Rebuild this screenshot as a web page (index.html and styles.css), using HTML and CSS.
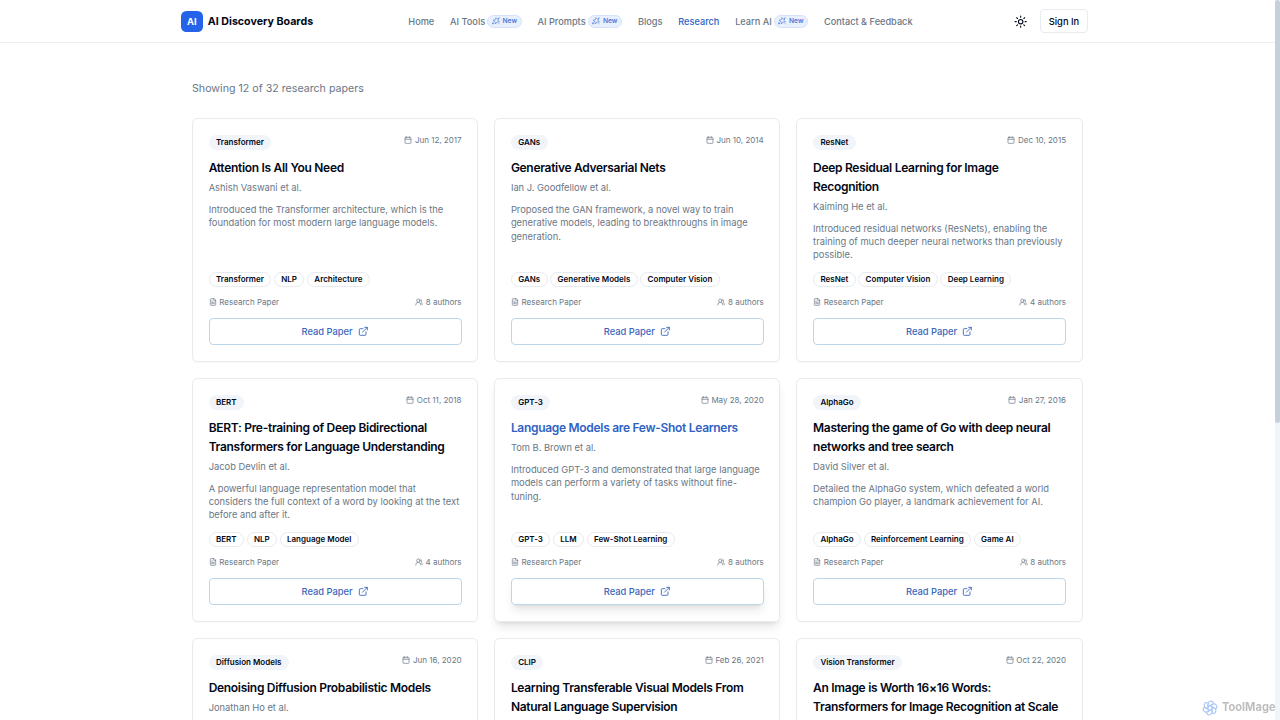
FILE: index.html
```
<!DOCTYPE html>
<html lang="en">
<head>
    <meta charset="UTF-8">
    <title>AI Discovery Boards</title>
    <link rel="stylesheet" href="styles.css">
</head>
<body>
<svg class="sprite">
    <symbol id="calendar" viewBox="0 0 24 24"><path d="M8 2v4M16 2v4M3 10h18"/><rect x="3" y="4" width="18" height="18" rx="2"/></symbol>
    <symbol id="file" viewBox="0 0 24 24"><path d="M15 2H6a2 2 0 0 0-2 2v16a2 2 0 0 0 2 2h12a2 2 0 0 0 2-2V7Z"/><path d="M14 2v4a2 2 0 0 0 2 2h4M10 9H8M16 13H8M16 17H8"/></symbol>
    <symbol id="users" viewBox="0 0 24 24"><path d="M18 21a8 8 0 0 0-16 0"/><circle cx="10" cy="8" r="5"/><path d="M22 20c0-3.37-2-6.5-4-8a5 5 0 0 0-.45-8.3"/></symbol>
    <symbol id="external" viewBox="0 0 24 24"><path d="M15 3h6v6M10 14 21 3M18 13v6a2 2 0 0 1-2 2H5a2 2 0 0 1-2-2V8a2 2 0 0 1 2-2h6"/></symbol>
    <symbol id="sun" viewBox="0 0 24 24"><circle cx="12" cy="12" r="4"/><path d="M12 2v2M12 20v2M4.93 4.93l1.41 1.41M17.66 17.66l1.41 1.41M2 12h2M20 12h2M6.34 17.66l-1.41 1.41M19.07 4.93l-1.41 1.41"/></symbol>
    <symbol id="sparkles" viewBox="0 0 24 24"><path d="M21 3 18 10l4 5-7 0-5 6-1-7-6-4 7-2 2-6 4 4Z"/><path d="M3 17v4M1 19h4M21 20h.01"/></symbol>
    <symbol id="petal" viewBox="0 0 24 24"><path d="M9 14V6a4.300 4.300 0 0 1 8-2.200M12 8.500l5-2.900"/></symbol>
</svg>

<header class="header">
    <div class="header-inner">
        <a class="brand"><span class="logo">AI</span>AI Discovery Boards</a>
        <nav class="nav">
            <a>Home</a>
            <a>AI Tools<span class="new"><svg><use href="#sparkles"/></svg>New</span></a>
            <a>AI Prompts<span class="new"><svg><use href="#sparkles"/></svg>New</span></a>
            <a>Blogs</a>
            <a class="active">Research</a>
            <a>Learn AI<span class="new"><svg><use href="#sparkles"/></svg>New</span></a>
            <a>Contact &amp; Feedback</a>
        </nav>
        <div class="actions">
            <span class="theme"><svg><use href="#sun"/></svg></span>
            <a class="sign-in">Sign In</a>
        </div>
    </div>
</header>

<main class="main">
    <p class="count">Showing 12 of 32 research papers</p>
    <div class="grid">
        <article class="card">
            <div class="top"><span class="badge">Transformer</span><span class="info"><svg><use href="#calendar"/></svg>Jun 12, 2017</span></div>
            <h3>Attention Is All You Need</h3>
            <p class="author">Ashish Vaswani et al.</p>
            <p class="desc">Introduced the Transformer architecture, which is the foundation for most modern large language models.</p>
            <div class="tags"><span>Transformer</span><span>NLP</span><span>Architecture</span></div>
            <div class="meta"><span class="info"><svg><use href="#file"/></svg>Research Paper</span><span class="info"><svg><use href="#users"/></svg>8 authors</span></div>
            <a class="read">Read Paper<svg><use href="#external"/></svg></a>
        </article>
        <article class="card">
            <div class="top"><span class="badge">GANs</span><span class="info"><svg><use href="#calendar"/></svg>Jun 10, 2014</span></div>
            <h3>Generative Adversarial Nets</h3>
            <p class="author">Ian J. Goodfellow et al.</p>
            <p class="desc">Proposed the GAN framework, a novel way to train generative models, leading to breakthroughs in image generation.</p>
            <div class="tags"><span>GANs</span><span>Generative Models</span><span>Computer Vision</span></div>
            <div class="meta"><span class="info"><svg><use href="#file"/></svg>Research Paper</span><span class="info"><svg><use href="#users"/></svg>8 authors</span></div>
            <a class="read">Read Paper<svg><use href="#external"/></svg></a>
        </article>
        <article class="card">
            <div class="top"><span class="badge">ResNet</span><span class="info"><svg><use href="#calendar"/></svg>Dec 10, 2015</span></div>
            <h3>Deep Residual Learning for Image Recognition</h3>
            <p class="author">Kaiming He et al.</p>
            <p class="desc">Introduced residual networks (ResNets), enabling the training of much deeper neural networks than previously possible.</p>
            <div class="tags"><span>ResNet</span><span>Computer Vision</span><span>Deep Learning</span></div>
            <div class="meta"><span class="info"><svg><use href="#file"/></svg>Research Paper</span><span class="info"><svg><use href="#users"/></svg>4 authors</span></div>
            <a class="read">Read Paper<svg><use href="#external"/></svg></a>
        </article>
        <article class="card">
            <div class="top"><span class="badge">BERT</span><span class="info"><svg><use href="#calendar"/></svg>Oct 11, 2018</span></div>
            <h3>BERT: Pre-training of Deep Bidirectional Transformers for Language Understanding</h3>
            <p class="author">Jacob Devlin et al.</p>
            <p class="desc">A powerful language representation model that considers the full context of a word by looking at the text before and after it.</p>
            <div class="tags"><span>BERT</span><span>NLP</span><span>Language Model</span></div>
            <div class="meta"><span class="info"><svg><use href="#file"/></svg>Research Paper</span><span class="info"><svg><use href="#users"/></svg>4 authors</span></div>
            <a class="read">Read Paper<svg><use href="#external"/></svg></a>
        </article>
        <article class="card hovered">
            <div class="top"><span class="badge">GPT-3</span><span class="info"><svg><use href="#calendar"/></svg>May 28, 2020</span></div>
            <h3>Language Models are Few-Shot Learners</h3>
            <p class="author">Tom B. Brown et al.</p>
            <p class="desc">Introduced GPT-3 and demonstrated that large language models can perform a variety of tasks without fine-tuning.</p>
            <div class="tags"><span>GPT-3</span><span>LLM</span><span>Few-Shot Learning</span></div>
            <div class="meta"><span class="info"><svg><use href="#file"/></svg>Research Paper</span><span class="info"><svg><use href="#users"/></svg>8 authors</span></div>
            <a class="read">Read Paper<svg><use href="#external"/></svg></a>
        </article>
        <article class="card">
            <div class="top"><span class="badge">AlphaGo</span><span class="info"><svg><use href="#calendar"/></svg>Jan 27, 2016</span></div>
            <h3>Mastering the game of Go with deep neural networks and tree search</h3>
            <p class="author">David Silver et al.</p>
            <p class="desc">Detailed the AlphaGo system, which defeated a world champion Go player, a landmark achievement for AI.</p>
            <div class="tags"><span>AlphaGo</span><span>Reinforcement Learning</span><span>Game AI</span></div>
            <div class="meta"><span class="info"><svg><use href="#file"/></svg>Research Paper</span><span class="info"><svg><use href="#users"/></svg>8 authors</span></div>
            <a class="read">Read Paper<svg><use href="#external"/></svg></a>
        </article>
        <article class="card cut">
            <div class="top"><span class="badge">Diffusion Models</span><span class="info"><svg><use href="#calendar"/></svg>Jun 16, 2020</span></div>
            <h3>Denoising Diffusion Probabilistic Models</h3>
            <p class="author">Jonathan Ho et al.</p>
        </article>
        <article class="card cut">
            <div class="top"><span class="badge">CLIP</span><span class="info"><svg><use href="#calendar"/></svg>Feb 26, 2021</span></div>
            <h3>Learning Transferable Visual Models From Natural Language Supervision</h3>
        </article>
        <article class="card cut">
            <div class="top"><span class="badge">Vision Transformer</span><span class="info"><svg><use href="#calendar"/></svg>Oct 22, 2020</span></div>
            <h3>An Image is Worth 16×16 Words: Transformers for Image Recognition at Scale</h3>
        </article>
    </div>
</main>

<div class="scrollbar"><div class="thumb"></div></div>
<div class="toolmage">
    <svg viewBox="0 0 24 24">
        <use href="#petal" width="24" height="24"/>
        <use href="#petal" width="24" height="24" transform="rotate(60 12 12)"/>
        <use href="#petal" width="24" height="24" transform="rotate(120 12 12)"/>
        <use href="#petal" width="24" height="24" transform="rotate(180 12 12)"/>
        <use href="#petal" width="24" height="24" transform="rotate(240 12 12)"/>
        <use href="#petal" width="24" height="24" transform="rotate(300 12 12)"/>
    </svg>
    ToolMage
</div>
</body>
</html>
```
FILE: styles.css
```
* {
    box-sizing: border-box;
}

body {
    margin: 0;
    height: 720px;
    overflow: hidden;
    background: #fff;
    color: #020817;
    font-family: Inter, "Liberation Sans", sans-serif;
    font-size: 10.67px;
}

h3, p {
    margin: 0;
}

svg {
    flex: none;
    fill: none;
    stroke: currentColor;
    stroke-width: 2;
    stroke-linecap: round;
    stroke-linejoin: round;
}

.sprite {
    display: none;
}

.header {
    height: 43.33px;
    padding-right: 10.67px;
    border-bottom: 1px solid #eceef1;
}

.header-inner {
    display: flex;
    align-items: center;
    justify-content: space-between;
    width: 907px;
    height: 42.67px;
    margin: 0 auto;
}

.brand {
    display: flex;
    align-items: center;
    gap: 5.33px;
    font-size: 10.67px;
    font-weight: 700;
}

.logo {
    width: 21.33px;
    height: 21.33px;
    border-radius: 5.33px;
    background: #2563eb;
    color: #fff;
    font-size: 9.33px;
    line-height: 21.33px;
    text-align: center;
}

.nav {
    display: flex;
    align-items: center;
    gap: 15.8px;
    color: #697786;
    font-size: 9.2px;
    font-weight: 500;
}

.nav a {
    display: flex;
    align-items: center;
    gap: 2px;
}

.nav .active {
    color: #2f62c4;
}

.new {
    display: flex;
    align-items: center;
    gap: 2.67px;
    height: 12.67px;
    padding: 0 3.7px;
    border: 1px solid #d5e2fb;
    border-radius: 7px;
    background: #e9f0fd;
    color: #4b7bdb;
    font-size: 6.67px;
    font-weight: 600;
}

.new svg {
    width: 8px;
    height: 8px;
}

.actions {
    display: flex;
    align-items: center;
    gap: 5.33px;
}

.theme {
    display: flex;
    align-items: center;
    justify-content: center;
    width: 26.67px;
    height: 26.67px;
}

.theme svg {
    width: 13.33px;
    height: 13.33px;
}

.sign-in {
    height: 24px;
    padding: 0 8px;
    border: 1px solid #e8ebf0;
    border-radius: 4px;
    font-size: 9.33px;
    font-weight: 500;
    line-height: 23px;
}

.main {
    width: 890.67px;
    margin-left: 192px;
    padding-top: 38px;
}

.count {
    margin-bottom: 21px;
    color: #697786;
    line-height: 16px;
}

.grid {
    display: grid;
    grid-template-columns: repeat(3, 1fr);
    grid-template-rows: 244px 244px 82px;
    gap: 16px;
}

.card {
    display: flex;
    flex-direction: column;
    padding: 15.67px;
    border: 1px solid #e7eaee;
    border-radius: 5.33px;
    box-shadow: 0 1px 1px rgba(0, 0, 0, .03);
}

/* last row continues below the fold */
.cut {
    padding-bottom: 0;
    border-bottom: 0;
    border-radius: 5.33px 5.33px 0 0;
}

.hovered {
    box-shadow: 0 7px 10px -2px rgba(0, 0, 0, .1), 0 3px 4px -3px rgba(0, 0, 0, .1);
}

.top, .meta {
    display: flex;
    align-items: flex-start;
    justify-content: space-between;
}

.top {
    margin-bottom: 9.33px;
}

.badge, .tags span {
    height: 14.67px;
    padding: 0 7.33px;
    border-radius: 8px;
    background: #f1f5f9;
    font-size: 8px;
    font-weight: 600;
    line-height: 14.67px;
}

.info {
    display: flex;
    align-items: center;
    gap: 2.67px;
    color: #697786;
    font-size: 8px;
    line-height: 10.67px;
}

.info svg {
    width: 8px;
    height: 8px;
}

h3 {
    font-size: 12px;
    font-weight: 600;
    letter-spacing: -.025em;
    line-height: 18.67px;
}

.hovered h3 {
    color: #2f62c4;
}

.author, .desc {
    color: #697786;
    font-size: 9.33px;
    line-height: 13.33px;
}

.author {
    margin: 3.67px 0 8.33px;
}

.desc {
    padding-right: 1px;
}

.tags {
    display: flex;
    gap: 2.67px;
    margin-top: auto;
}

.tags span {
    padding: 0 6.33px;
    border: 1px solid #e7eaee;
    background: #fff;
    line-height: 12.67px;
}

.meta {
    margin: 10px 0 10.33px;
}

.read {
    display: flex;
    align-items: center;
    justify-content: center;
    gap: 5.33px;
    height: 27px;
    margin-bottom: .67px;
    border: 1px solid #bcd7ea;
    border-radius: 4px;
    color: #3a66bb;
    font-size: 9.33px;
    font-weight: 500;
}

.hovered .read {
    box-shadow: 0 7px 10px -2px rgba(0, 0, 0, .1), 0 3px 4px -3px rgba(0, 0, 0, .1);
}

.read svg {
    width: 10.67px;
    height: 10.67px;
}

.scrollbar {
    position: fixed;
    top: 0;
    right: 0;
    width: 5px;
    height: 720px;
    background: #f1f5f9;
}

.thumb {
    height: 422.67px;
    border-radius: 3px;
    background: #c6d0da;
}

.toolmage {
    position: fixed;
    right: 4.5px;
    bottom: 4px;
    display: flex;
    align-items: center;
    gap: 3.5px;
    color: #bdbdbf;
    font-size: 11.1px;
    font-weight: 700;
    line-height: 17px;
}

.toolmage svg {
    width: 16px;
    height: 16px;
    color: #aac6f7;
    stroke-width: 1.7;
}
```
